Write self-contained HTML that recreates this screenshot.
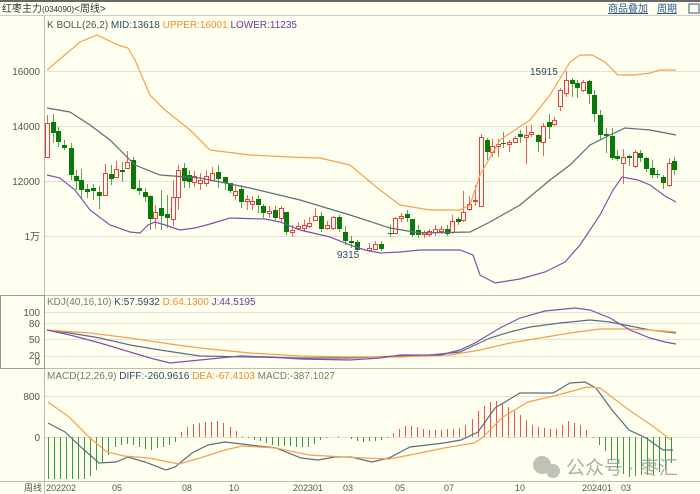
<!DOCTYPE html>
<html><head><meta charset="utf-8"><style>
html,body{margin:0;padding:0;background:#fffff0;}
body{width:700px;height:494px;overflow:hidden;position:relative;font-family:"Liberation Sans","Noto Sans CJK SC",sans-serif;}
svg{position:absolute;left:0;top:0}
</style></head><body>
<svg id="s" width="700" height="494" xmlns="http://www.w3.org/2000/svg" font-family="Liberation Sans, Noto Sans CJK SC, sans-serif">
<rect x="0" y="0" width="700" height="494" fill="#fffff0"/>
<rect x="0" y="0" width="700" height="2" fill="#666"/>
<rect x="0" y="2" width="700" height="13" fill="#fffff0"/>
<line x1="0" y1="15.5" x2="700" y2="15.5" stroke="#ccc"/>
<text x="2" y="12" font-size="10" fill="#333">红枣主力<tspan font-size="8">(034090)</tspan>&lt;周线&gt;</text>
<text x="608" y="12" font-size="10" fill="#2a5a8a" text-decoration="underline">商品叠加</text>
<text x="657" y="12" font-size="10" fill="#2a5a8a" text-decoration="underline">周期</text>
<rect x="689" y="4" width="10" height="9" fill="none" stroke="#2a5a8a"/>
<g stroke="#e2e2d6" stroke-width="1">
<line x1="44" y1="71.5" x2="700" y2="71.5"/><line x1="44" y1="126.5" x2="700" y2="126.5"/><line x1="44" y1="181.5" x2="700" y2="181.5"/><line x1="44" y1="236.5" x2="700" y2="236.5"/>
<line x1="44" y1="312.5" x2="700" y2="312.5"/><line x1="44" y1="323.5" x2="700" y2="323.5"/><line x1="44" y1="339.5" x2="700" y2="339.5"/><line x1="44" y1="356.5" x2="700" y2="356.5"/>
<line x1="44" y1="396.5" x2="700" y2="396.5"/><line x1="44" y1="437.5" x2="700" y2="437.5"/>
</g>
<g stroke="#bbb">
<line x1="44.5" y1="16" x2="44.5" y2="494"/>
<line x1="0" y1="295.5" x2="700" y2="295.5"/>
<line x1="0" y1="368.5" x2="700" y2="368.5"/>
<line x1="0" y1="481.5" x2="700" y2="481.5"/>
</g>
<rect x="0.5" y="295.5" width="44" height="73" fill="none" stroke="#999"/>
<g font-size="10" fill="#555" text-anchor="end">
<text x="40" y="75">16000</text><text x="40" y="130">14000</text><text x="40" y="185">12000</text><text x="40" y="240">1万</text>
<text x="40" y="316">100</text><text x="40" y="327">80</text><text x="40" y="343">50</text><text x="40" y="359">20</text><text x="40" y="365">0</text>
<text x="40" y="400">800</text><text x="40" y="441">0</text>
</g>
<text x="47" y="28" font-size="10" fill="#555">K  BOLL(26,2) <tspan fill="#2e4a6a">MID:13618</tspan> <tspan fill="#f08c2a">UPPER:16001</tspan> <tspan fill="#6a3aa0">LOWER:11235</tspan></text>
<text x="47" y="305" font-size="10" fill="#777">KDJ(40,16,10) <tspan fill="#2e4a6a">K:57.5932</tspan> <tspan fill="#f08c2a">D:64.1300</tspan> <tspan fill="#6a3aa0">J:44.5195</tspan></text>
<text x="47" y="379" font-size="10" fill="#777">MACD(12,26,9) <tspan fill="#2e4a6a">DIFF:-260.9616</tspan> <tspan fill="#f08c2a">DEA:-67.4103</tspan> MACD:-387.1027</text>
<g font-size="9" fill="#555">
<text x="24" y="491">周线</text><text x="46" y="491">202202</text><text x="112" y="491">05</text><text x="182" y="491">08</text><text x="229" y="491">10</text><text x="293" y="491">202301</text><text x="343" y="491">03</text><text x="395" y="491">05</text><text x="444" y="491">07</text><text x="515" y="491">10</text><text x="582" y="491">202401</text><text x="621" y="491">03</text>
</g>
<g font-size="10" fill="#2e4a6a"><text x="337" y="258">9315</text><text x="530" y="75">15915</text></g>
<g id="hist"></g>
<g id="cand"></g>
<g fill="none" stroke-width="1.2">
<polyline stroke="#f5a050" points="47,70 80,42 97,35 118,45 128,48 135,60 150,95 165,110 190,130 210,150 250,155 290,157 320,158 350,165 380,190 400,205 430,210 460,210 470,205 480,175 500,140 530,120 550,95 570,62 580,55 592,55 605,62 618,75 635,75 650,73 660,70 676,70"/>
<polyline stroke="#5a6e80" points="47,108 70,112 90,125 110,140 135,165 160,175 200,178 250,188 300,200 350,215 390,228 420,233 470,232 490,222 520,205 550,180 570,165 590,145 610,135 625,128 650,130 676,135"/>
<polyline stroke="#8050b0" points="47,175 60,178 75,190 90,210 110,225 130,232 140,233 148,225 155,222 165,225 180,230 195,228 210,224 230,218 265,219 280,222 300,230 330,237 350,245 365,250 380,253 400,252 420,250 460,250 473,255 480,275 495,283 520,279 545,272 565,262 580,245 600,215 613,190 622,177 638,180 650,185 665,196 676,202"/>
<polyline stroke="#5a6e80" points="47,330 70,333 100,338 130,345 160,350 200,356 250,357 300,358 350,358 400,356 430,355 460,352 475,345 490,338 510,332 530,327 560,323 590,320 610,322 630,326 650,330 676,333"/>
<polyline stroke="#f5a050" points="47,330 90,333 130,338 170,344 200,348 250,353 300,356 350,357 400,357 450,355 480,350 510,343 540,338 570,333 600,329 630,329 650,330 676,332"/>
<polyline stroke="#8050b0" points="47,330 70,335 100,343 130,352 150,358 170,363 190,361 210,359 240,356 270,357 300,359 350,360 380,358 400,355 440,355 460,350 475,343 500,328 520,318 545,311 575,308 590,310 610,318 630,330 650,338 665,342 676,344"/>
<polyline stroke="#5a6e80" points="48,423 65,432 82,448 99,463 116,462 128,457 145,462 166,470 175,467 192,453 208,445 225,442 250,445 276,448 301,458 318,460 335,457 351,457 372,462 389,458 410,447 444,443 461,440 478,432 495,408 520,393 537,393 553,393 570,383 585,382 596,388 612,410 629,430 646,438 663,450 673,450"/>
<polyline stroke="#f5a050" points="48,402 69,417 90,438 107,452 124,456 149,458 179,464 200,458 225,450 242,446 276,448 309,455 343,457 389,459 410,455 444,448 474,443 482,438 503,417 528,402 558,395 587,387 600,388 629,410 654,427 671,440"/>
</g>
<g opacity="0.45" fill="#777"><circle cx="542" cy="465" r="9"/><circle cx="553" cy="471" r="7"/></g>
<text x="566" y="474" font-size="19" fill="#999" opacity="0.8">公众号 · 枣汇</text>
</svg>
<script>
var C=[[47,'r',123,157,115,157],[53,'g',122,133,114,143],[58,'g',131,142,127,147],[64,'g',145,148,140,150],[71,'g',148,175,143,180],[76,'g',176,181,170,190],[81,'g',180,190,169,198],[87,'g',189,192,184,198],[93,'g',188,191,184,200],[99,'g',192,196,186,209],[105,'r',173,195,164,195],[111,'g',174,179,165,185],[116,'r',169,177,161,177],[122,'g',170,172,162,182],[127,'r',162,168,151,168],[133,'g',160,189,157,190],[139,'g',188,191,180,195],[145,'g',192,197,188,202],[150,'g',196,219,195,230],[155,'r',212,218,205,229],[161,'g',208,216,190,230],[167,'g',214,218,195,228],[173,'r',197,219,180,226],[178,'r',170,197,165,210],[184,'g',168,181,163,188],[189,'g',175,182,170,188],[194,'r',176,182,171,187],[200,'r',180,183,173,190],[206,'r',176,183,170,187],[212,'r',173,180,167,180],[218,'g',172,179,165,188],[225,'g',177,183,177,190],[230,'g',183,191,183,193],[235,'r',191,195,186,200],[241,'g',189,202,185,208],[247,'r',199,201,195,210],[252,'r',201,204,196,210],[258,'g',199,205,195,213],[263,'g',206,213,204,218],[269,'r',211,213,206,218],[275,'g',210,218,206,220],[281,'r',208,218,206,222],[286,'g',212,232,212,235],[292,'r',230,232,225,237],[298,'r',226,228,222,230],[304,'r',225,228,220,232],[309,'r',223,226,217,228],[315,'r',216,220,208,220],[321,'g',216,229,212,232],[327,'r',225,228,221,230],[333,'r',217,228,216,230],[339,'g',217,229,215,232],[345,'g',232,241,226,245],[351,'g',241,243,236,248],[357,'g',242,250,240,252],[369,'r',248,250,243,252],[375,'r',244,249,241,250],[381,'g',244,249,241,251],[390,'g',233,234,225,237],[395,'r',218,233,217,234],[401,'r',216,218,213,222],[407,'g',214,218,210,222],[412,'g',219,235,219,237],[418,'g',230,235,225,238],[424,'r',232,234,230,238],[429,'r',231,234,229,237],[435,'r',229,232,225,236],[441,'r',229,231,226,234],[447,'g',229,234,225,236],[452,'r',221,232,215,234],[458,'g',219,222,217,225],[463,'r',212,220,191,222],[469,'r',204,209,196,211],[475,'r',200,201,185,206],[481,'r',137,206,134,206],[487,'g',140,152,138,160],[492,'r',146,152,139,157],[498,'r',144,146,139,157],[503,'g',143,144,132,148],[509,'r',142,144,140,152],[515,'r',138,142,136,143],[520,'g',134,137,130,143],[526,'r',135,137,126,164],[531,'r',132,134,125,137],[538,'g',135,142,134,152],[543,'r',126,142,123,156],[549,'g',122,127,114,139],[554,'r',120,124,117,126],[560,'r',90,106,88,111],[566,'r',80,93,71,97],[572,'g',80,84,78,97],[577,'g',83,88,80,98],[583,'r',82,90,80,92],[589,'g',81,94,80,104],[594,'g',95,114,90,122],[600,'g',115,135,110,140],[606,'g',134,136,128,153],[612,'g',136,158,128,160],[617,'g',156,159,150,161],[623,'r',157,163,149,184],[629,'g',156,158,155,166],[635,'r',152,166,150,168],[640,'g',153,158,150,162],[646,'g',158,169,157,172],[652,'g',168,175,160,178],[657,'g',174,175,170,178],[663,'g',177,183,175,189],[669,'r',163,185,158,187],[674,'g',161,170,157,175]];
var s='';C.forEach(function(c){var x=c[0],col=c[1]=='r'?'#f03c3c':'#087a08',wc=c[1]=='r'?'#f06060':'#5aa05a';
s+='<line x1="'+(x+0.5)+'" y1="'+c[4]+'" x2="'+(x+0.5)+'" y2="'+c[5]+'" stroke="'+wc+'"/>';
var h=Math.max(1,c[3]-c[2]);
if(c[1]=='r')s+='<rect x="'+(x-1.5)+'" y="'+(c[2]+0.5)+'" width="4" height="'+h+'" fill="#fffff0" stroke="'+col+'"/>';
else s+='<rect x="'+(x-2)+'" y="'+c[2]+'" width="5" height="'+h+'" fill="'+col+'"/>';});
document.getElementById('cand').innerHTML=s;
var P=[[48,-42],[87,-42],[99,-30],[115,-9],[128,-7],[150,-13],[174,-7],[180,4],[191,13],[219,16],[230,10],[242,1],[252,-2],[275,-9],[310,-10],[322,-2],[340,1],[360,-5],[384,-3],[396,7],[407,12],[430,7],[458,8],[468,14],[480,29],[493,37],[503,33],[518,23],[535,10],[555,7],[567,16],[583,11],[594,-3],[605,-14],[614,-30],[627,-40],[654,-37],[666,-33],[676,-20]];
function f(x){for(var i=0;i<P.length-1;i++){if(x>=P[i][0]&&x<=P[i+1][0]){var t=(x-P[i][0])/(P[i+1][0]-P[i][0]);return P[i][1]+t*(P[i+1][1]-P[i][1]);}}return 0;}
var h='';for(var x=48;x<=676;x+=6.05){var v=Math.round(f(x));if(v==0)continue;var xx=Math.round(x)+0.5;
h+='<line x1="'+xx+'" y1="437" x2="'+xx+'" y2="'+(437-v)+'" stroke="'+(v>0?'#f05050':'#3a9a3a')+'"/>';}
document.getElementById('hist').innerHTML=h;
</script>
</body></html>
